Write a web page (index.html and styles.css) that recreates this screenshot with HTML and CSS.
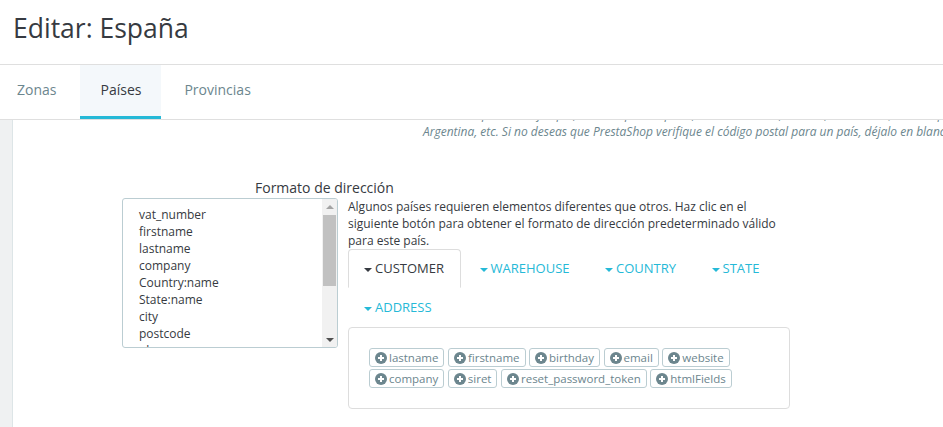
FILE: index.html
```html
<!DOCTYPE html>
<html lang="es">
<head>
<meta charset="utf-8">
<title>Editar: España</title>
<link rel="stylesheet" href="styles.css">
</head>
<body>
<header class="head">
  <h1 class="title">Editar: España</h1>
</header>
<nav class="head-tabs">
  <a class="htab">Zonas</a>
  <a class="htab is-current">Países</a>
  <a class="htab">Provincias</a>
</nav>
<div class="body">
  <div class="rail"></div>
  <main class="main">
    <p class="hint">
      <span class="hint-line">3166-1 del país. Por ejemplo, NNNNN para España, Estados Unidos, Francia, entre otros; LNNNN para</span>
      <span class="hint-line">Argentina, etc. Si no deseas que PrestaShop verifique el código postal para un país, déjalo en blanco.</span>
    </p>
    <div class="field-label">Formato de dirección</div>
    <div class="field-row">
      <div class="fmt-box">
        <div class="fmt-lines">
          <div>vat_number</div>
          <div>firstname</div>
          <div>lastname</div>
          <div>company</div>
          <div>Country:name</div>
          <div>State:name</div>
          <div>city</div>
          <div>postcode</div>
          <div>phone</div>
        </div>
        <div class="sb">
          <div class="sb-btn"><span class="tri-up"></span></div>
          <div class="sb-thumb"></div>
          <div class="sb-fill"></div>
          <div class="sb-btn"><span class="tri-down"></span></div>
        </div>
      </div>
      <div class="side">
        <p class="desc">Algunos países requieren elementos diferentes que otros. Haz clic en el siguiente botón para obtener el formato de dirección predeterminado válido para este país.</p>
        <ul class="ftabs">
          <li class="ftab is-active"><span class="caret"></span>CUSTOMER</li>
          <li class="ftab"><span class="caret"></span>WAREHOUSE</li>
          <li class="ftab"><span class="caret"></span>COUNTRY</li>
          <li class="ftab"><span class="caret"></span>STATE</li>
          <li class="ftab"><span class="caret"></span>ADDRESS</li>
        </ul>
        <div class="panel">
          <div class="chips">
            <span class="chip"><svg class="plus" viewBox="0 0 12 12"><circle cx="6" cy="6" r="6"/><path d="M6 3v6M3 6h6"/></svg>lastname</span>
            <span class="chip"><svg class="plus" viewBox="0 0 12 12"><circle cx="6" cy="6" r="6"/><path d="M6 3v6M3 6h6"/></svg>firstname</span>
            <span class="chip"><svg class="plus" viewBox="0 0 12 12"><circle cx="6" cy="6" r="6"/><path d="M6 3v6M3 6h6"/></svg>birthday</span>
            <span class="chip"><svg class="plus" viewBox="0 0 12 12"><circle cx="6" cy="6" r="6"/><path d="M6 3v6M3 6h6"/></svg>email</span>
            <span class="chip"><svg class="plus" viewBox="0 0 12 12"><circle cx="6" cy="6" r="6"/><path d="M6 3v6M3 6h6"/></svg>website</span>
            <span class="chip"><svg class="plus" viewBox="0 0 12 12"><circle cx="6" cy="6" r="6"/><path d="M6 3v6M3 6h6"/></svg>company</span>
            <span class="chip"><svg class="plus" viewBox="0 0 12 12"><circle cx="6" cy="6" r="6"/><path d="M6 3v6M3 6h6"/></svg>siret</span>
            <span class="chip"><svg class="plus" viewBox="0 0 12 12"><circle cx="6" cy="6" r="6"/><path d="M6 3v6M3 6h6"/></svg>reset_password_token</span>
            <span class="chip"><svg class="plus" viewBox="0 0 12 12"><circle cx="6" cy="6" r="6"/><path d="M6 3v6M3 6h6"/></svg>htmlFields</span>
          </div>
        </div>
      </div>
    </div>
  </main>
</div>
</body>
</html>
```

FILE: styles.css
```css
html, body {
  margin: 0;
  padding: 0;
}
body {
  width: 943px;
  height: 427px;
  overflow: hidden;
  background: #fff;
  font-family: "Open Sans", "Liberation Sans", sans-serif;
  color: #363a41;
}

/* header */
.head {
  height: 54px;
  padding-top: 10px;
  border-bottom: 1px solid #dfdfdf;
}
.title {
  margin: 0 0 0 13px;
  font-size: 26.5px;
  font-weight: 400;
  line-height: 36px;
  color: #363a41;
}

/* page tabs */
.head-tabs {
  display: flex;
  gap: 3px;
  height: 54px;
  border-bottom: 1px solid #dfdfdf;
}
.htab {
  display: block;
  padding: 15px 20px 16px;
  line-height: 20px;
  font-size: 14px;
  color: #6c868e;
  border-bottom: 3px solid transparent;
}
.htab:first-child {
  padding-left: 17px;
  padding-right: 21px;
}
.htab.is-current {
  background: #f4f8fb;
  color: #363a41;
  border-bottom-color: #25b9d7;
}

/* body */
.body {
  display: flex;
  height: 307px;
}
.rail {
  width: 12px;
  flex: none;
  background: #eff1f2;
  border-right: 1px solid #dde5e7;
}
.main {
  flex: 1;
  min-width: 0;
  overflow: hidden;
}
.hint {
  margin: -14px 0 0 410px;
  font-size: 12px;
  line-height: 17px;
  font-style: italic;
  color: #6c868e;
  white-space: nowrap;
}
.hint-line {
  display: block;
}
.field-label {
  margin: 37px 0 0 242px;
  font-size: 14px;
  line-height: 21px;
  color: #363a41;
}
.field-row {
  display: flex;
  align-items: flex-start;
  gap: 10px;
  margin-left: 109px;
}

/* address format box */
.fmt-box {
  width: 216px;
  height: 150px;
  box-sizing: border-box;
  border: 1px solid #bbcdd2;
  border-radius: 3px;
  display: flex;
  overflow: hidden;
  flex: none;
}
.fmt-lines {
  flex: 1;
  padding: 7px 0 0 16px;
  font-size: 12px;
  line-height: 17px;
  color: #363a41;
  overflow: hidden;
}
.sb {
  width: 15px;
  flex: none;
  background: #f1f1f1;
  display: flex;
  flex-direction: column;
}
.sb-btn {
  height: 15px;
  flex: none;
  display: flex;
  align-items: center;
  justify-content: center;
}
.sb-thumb {
  height: 71px;
  margin: 1px 1px 0;
  background: #c1c1c1;
}
.sb-fill {
  flex: 1;
}
.tri-up {
  width: 0;
  height: 0;
  border-left: 4px solid transparent;
  border-right: 4px solid transparent;
  border-bottom: 4px solid #a3a3a3;
}
.tri-down {
  width: 0;
  height: 0;
  border-left: 4px solid transparent;
  border-right: 4px solid transparent;
  border-top: 4px solid #505050;
}

/* right side */
.side {
  width: 442px;
  flex: none;
}
.desc {
  margin: 0;
  font-size: 12px;
  line-height: 17px;
  color: #363a41;
}
.ftabs {
  display: flex;
  flex-wrap: wrap;
  column-gap: 3px;
  list-style: none;
  margin: 0;
  padding: 0;
}
.ftab {
  padding: 9px 15.5px 9px 15px;
  line-height: 19px;
  font-size: 13px;
  color: #25b9d7;
  border: 1px solid transparent;
  border-radius: 4px 4px 0 0;
}
.ftab.is-active {
  color: #363a41;
  border-color: #dddddd;
  border-bottom-color: transparent;
  background: #fff;
}
.caret {
  display: inline-block;
  width: 0;
  height: 0;
  border-left: 4px solid transparent;
  border-right: 4px solid transparent;
  border-top: 4px solid currentColor;
  vertical-align: middle;
  margin-right: 3px;
}
.panel {
  border: 1px solid #dddddd;
  border-radius: 4px;
  padding: 20px;
}
.chips {
  display: flex;
  flex-wrap: wrap;
  gap: 2px 3.5px;
}
.chip {
  display: inline-flex;
  align-items: center;
  height: 19px;
  box-sizing: border-box;
  padding: 0 5px;
  border: 1px solid #bbcdd2;
  border-radius: 3px;
  background: #fff;
  font-size: 11.5px;
  line-height: 17px;
  color: #6c868e;
}
.plus {
  width: 12px;
  height: 12px;
  margin-right: 2px;
  flex: none;
}
.plus circle {
  fill: #6c868e;
}
.plus path {
  stroke: #fff;
  stroke-width: 2;
  fill: none;
}
```
